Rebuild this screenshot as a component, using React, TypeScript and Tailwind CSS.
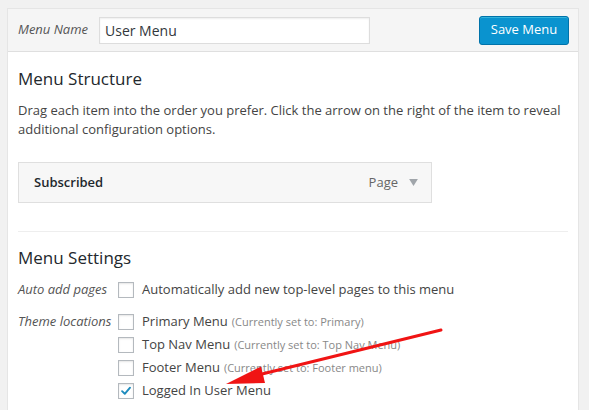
import React from 'react';

const font = { fontFamily: '"Open Sans", "Noto Sans", sans-serif' };

function Checkbox({ checked = false }: { checked?: boolean }) {
  return (
    <span className="relative flex h-[16px] w-[16px] shrink-0 items-center justify-center border border-[#b4b9be] bg-white shadow-[inset_0_1px_2px_rgba(0,0,0,0.1)]">
      {checked && (
        <svg viewBox="0 0 16 16" className="h-[14px] w-[14px]">
          <path d="M3.5 8.2 L6.6 11.2 L12.6 4.2" fill="none" stroke="#1e8cbe" strokeWidth="2.2" strokeLinecap="round" strokeLinejoin="round" />
        </svg>
      )}
    </span>
  );
}

function LocationRow({ label, note, checked }: { label: string; note?: string; checked?: boolean }) {
  return (
    <div className="flex h-[23px] items-center">
      <Checkbox checked={checked} />
      <span className="ml-[8px] whitespace-nowrap text-[13px] text-[#444]">
        {label}
        {note && <span className="ml-[4px] text-[11px] text-[#888]">{note}</span>}
      </span>
    </div>
  );
}

export default function App() {
  return (
    <div className="relative h-[410px] w-[589px] overflow-hidden bg-[#f1f1f1] pt-[8px] pl-[7px]" style={font}>
      <div className="h-[420px] w-[572px] border border-[#e5e5e5] bg-white">
        {/* Header */}
        <div className="flex h-[43px] items-center justify-between border-b border-[#dfdfdf] bg-[#f5f5f5] pl-[10px] pr-[9px]">
          <div className="flex items-center">
            <span className="w-[81px] text-[13px] italic text-[#555]">Menu Name</span>
            <div className="flex h-[27px] w-[271px] items-center border border-[#ddd] bg-white px-[5px] text-[14px] text-[#32373c] shadow-[inset_0_1px_2px_rgba(0,0,0,0.07)]">
              User Menu
            </div>
          </div>
          <button className="h-[29px] w-[90px] rounded-[3px] border border-[#0073aa] bg-[#0a93cf] text-[13px] text-white shadow-[inset_0_1px_0_#33b3db]">
            Save Menu
          </button>
        </div>

        {/* Body */}
        <div className="px-[10px]">
          <h3 className="mt-[15px] text-[17px] leading-[24px] text-[#23282d]">Menu Structure</h3>
          <p className="mt-[10px] text-[13px] leading-[19px] text-[#444]">
            Drag each item into the order you prefer. Click the arrow on the right of the item to reveal additional configuration options.
          </p>

          <div className="mt-[23px] flex h-[41px] w-[414px] items-center justify-between border border-[#dfdfdf] bg-[#f7f7f7] pl-[15px] pr-[13px]">
            <span className="text-[13px] font-semibold text-[#23282d]">Subscribed</span>
            <div className="flex items-center gap-[11px]">
              <span className="text-[13px] text-[#666]">Page</span>
              <svg viewBox="0 0 10 8" className="h-[7px] w-[9px]">
                <path d="M0 0 L10 0 L5 8 Z" fill="#a0a5aa" />
              </svg>
            </div>
          </div>

          <div className="mt-[28px] border-t border-[#eee]" />

          <h3 className="mt-[14px] text-[17px] leading-[24px] text-[#23282d]">Menu Settings</h3>

          <div className="mt-[8px] flex h-[23px] items-center">
            <span className="w-[100px] text-[13px] italic text-[#555]">Auto add pages</span>
            <LocationRow label="Automatically add new top-level pages to this menu" />
          </div>

          <div className="mt-[9px] flex items-start">
            <span className="flex h-[23px] w-[100px] items-center text-[13px] italic text-[#555]">Theme locations</span>
            <div className="flex flex-col">
              <LocationRow label="Primary Menu" note="(Currently set to: Primary)" />
              <LocationRow label="Top Nav Menu" note="(Currently set to: Top Nav Menu)" />
              <LocationRow label="Footer Menu" note="(Currently set to: Footer menu)" />
              <LocationRow label="Logged In User Menu" checked />
            </div>
          </div>
        </div>
      </div>

      {/* Red annotation arrow */}
      <svg className="pointer-events-none absolute left-0 top-0" width="589" height="410" viewBox="0 0 589 410">
        <line x1="441" y1="330" x2="258" y2="375" stroke="#f01414" strokeWidth="3" strokeLinecap="round" />
        <polygon points="226,384 261,366.5 265,383" fill="#f01414" />
      </svg>
    </div>
  );
}
